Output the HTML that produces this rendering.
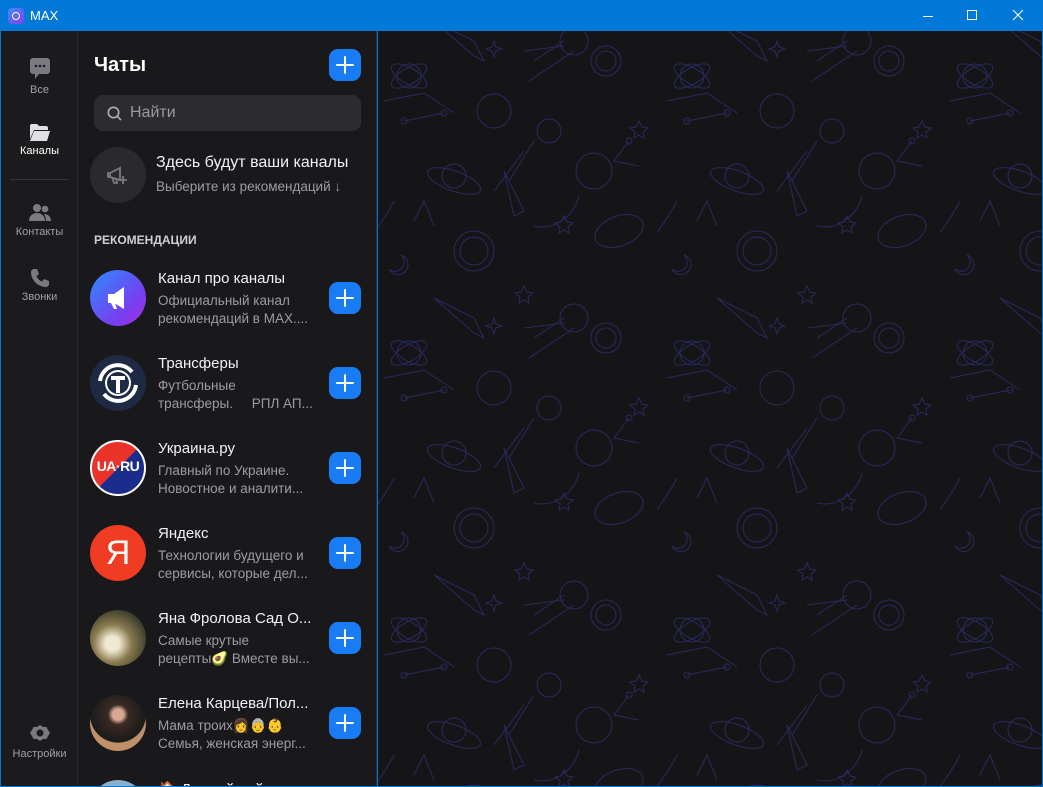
<!DOCTYPE html>
<html><head><meta charset="utf-8"><style>
*{margin:0;padding:0;box-sizing:border-box}
html,body{width:1043px;height:787px;overflow:hidden}
body{background:#0078d7;font-family:"Liberation Sans","Noto Sans CJK SC",sans-serif;position:relative}
.title{position:absolute;left:0;top:0;width:1043px;height:31px;background:#0078d7;color:#fff;font-size:13px}
.title .logo{position:absolute;left:8px;top:8px;width:16px;height:16px;border-radius:4px;background:linear-gradient(135deg,#3a8cff,#8a3cf0)}
.title .logo:after{content:"";position:absolute;left:4px;top:4px;width:6px;height:6px;border:1.6px solid #fff;border-radius:50%}
.title .t{position:absolute;left:30px;top:8px}
.side{position:absolute;left:1px;top:31px;width:77px;height:755px;background:#1b1b1e;border-right:1px solid #2a2a2e}
.nav{position:absolute;left:0;width:77px;text-align:center;font-size:11px;color:#a0a0a6}
.nav svg{display:block;margin:0 auto 3px}
.list{position:absolute;left:78px;top:31px;width:299px;height:755px;background:#19191c;border-right:1px solid #2c2c30;overflow:hidden}
.right{position:absolute;left:378px;top:31px;width:664px;height:755px;background:#151517;overflow:hidden}
h1{position:absolute;left:16px;top:23px;font-size:20px;color:#fff;font-weight:bold}
.plus{position:absolute;width:32px;height:32px;border-radius:9px;background:#1a7cf5}
.plus:before,.plus:after{content:"";position:absolute;background:#fff;border-radius:1px}
.plus:before{left:7px;top:14.8px;width:18px;height:2.6px}
.plus:after{left:14.7px;top:7px;width:2.6px;height:18px}
.search{position:absolute;left:16px;top:64px;width:267px;height:36px;border-radius:9px;background:#2c2c30;color:#9a9aa0;font-size:16px}
.search span{position:absolute;left:36px;top:9px}
.item{position:absolute;left:0;width:299px;height:85px;overflow:hidden}
.av{position:absolute;left:12px;top:0;width:56px;height:56px;border-radius:50%;overflow:hidden}
.nm{position:absolute;left:80px;top:0;font-size:15px;color:#f2f2f4;white-space:nowrap}
.ds{position:absolute;left:80px;top:22px;font-size:13.5px;color:#9c9ca2;line-height:18px;width:157px}
.item .plus{left:251px;top:12px}
</style></head><body>
<div class="title"><div class="logo"></div><div class="t">MAX</div>
<svg style="position:absolute;left:922px;top:10px" width="12" height="12"><line x1="1" y1="6.5" x2="11" y2="6.5" stroke="#fff"/></svg>
<svg style="position:absolute;left:966px;top:9px" width="12" height="12"><rect x="1.5" y="1.5" width="9" height="9" fill="none" stroke="#fff"/></svg>
<svg style="position:absolute;left:1012px;top:9px" width="12" height="12"><path d="M1 1L11 11M11 1L1 11" stroke="#fff"/></svg>
</div>
<div class="side">
<div class="nav" style="top:26px"><svg width="22" height="24" viewBox="0 0 22 24"><path d="M4 1h14a3 3 0 0 1 3 3v10a3 3 0 0 1-3 3H10l-4 5v-5H4a3 3 0 0 1-3-3V4a3 3 0 0 1 3-3z" fill="#7a7a80"/><circle cx="7" cy="9" r="1.3" fill="#1b1b1e"/><circle cx="11" cy="9" r="1.3" fill="#1b1b1e"/><circle cx="15" cy="9" r="1.3" fill="#1b1b1e"/></svg>Все</div>
<div class="nav" style="top:92px;color:#fff"><svg width="22" height="19" viewBox="0 0 22 19"><path d="M1 3a2 2 0 0 1 2-2h5l2 2h7a2 2 0 0 1 2 2v2H5L1 16z" fill="#e0e0e4"/><path d="M5 8h16l-3 10H1z" fill="#e0e0e4"/></svg>Каналы</div>
<div style="position:absolute;left:9px;top:148px;width:59px;height:1px;background:#333338"></div>
<div class="nav" style="top:172px"><svg width="24" height="20" viewBox="0 0 24 20"><circle cx="9" cy="5" r="4" fill="#7a7a80"/><circle cx="17" cy="6" r="3.3" fill="#7a7a80"/><path d="M1 18c0-5 3.5-8 8-8s8 3 8 8z" fill="#7a7a80"/><path d="M16 11c4 0 7 2.5 7 7h-5c0-3-1-5-2-7z" fill="#7a7a80"/></svg>Контакты</div>
<div class="nav" style="top:237px"><svg width="20" height="20" viewBox="0 0 20 20"><path d="M4 1l3 0 2 5-2.5 2c1 2.5 3 4.5 5.5 5.5l2-2.5 5 2v3c0 1.5-1.5 3-3 3C8 19 1 12 1 4c0-1.5 1.5-3 3-3z" fill="#7a7a80"/></svg>Звонки</div>
<div class="nav" style="top:692px"><svg width="22" height="22" viewBox="0 0 22 22"><path d="M11 1l3 2 3.5 0 1.5 3 2 3-2 3-1.5 3-3.5 0-3 2-3-2-3.5 0L3 12 1 9l2-3 1.5-3H8z" fill="#7a7a80" transform="translate(0,1)"/><circle cx="11" cy="10" r="3.5" fill="#1b1b1e"/></svg>Настройки</div>
</div>
<div class="list">
<h1>Чаты</h1>
<div class="plus" style="left:251px;top:18px"></div>
<div class="search"><svg style="position:absolute;left:13px;top:11px" width="15" height="15"><circle cx="6.5" cy="6.5" r="5.2" fill="none" stroke="#b0b0b6" stroke-width="1.6"/><line x1="10.3" y1="10.3" x2="14" y2="14" stroke="#b0b0b6" stroke-width="1.6"/></svg><span>Найти</span></div>
<div style="position:absolute;left:12px;top:116px;width:56px;height:56px;border-radius:50%;background:#2a2a2e"><svg width="56" height="56" viewBox="0 0 56 56"><path d="M20 26l10-5v12l-10-3zM20 26h-2v4h2M22 30l2 6h3l-1-5" fill="none" stroke="#7a7a80" stroke-width="1.8"/><path d="M33 29v8M29 33h8" stroke="#7a7a80" stroke-width="1.8"/></svg></div>
<div style="position:absolute;left:78px;top:123px;font-size:16px;color:#f2f2f4">Здесь будут ваши каналы</div>
<div style="position:absolute;left:78px;top:148px;font-size:13.5px;color:#9c9ca2">Выберите из рекомендаций ↓</div>
<div style="position:absolute;left:16px;top:202px;font-size:12px;color:#d0d0d4;font-weight:bold">РЕКОМЕНДАЦИИ</div>

<div class="item" style="top:239px"><div class="av" style="background:linear-gradient(135deg,#2a8cff,#7a3cf0 70%,#b030e0)"><svg width="56" height="56"><path d="M18 24h6l10-7v22l-10-6h-6z" fill="#fff"/><path d="M21 33l3 6h3l-2-6" fill="#fff"/></svg></div><div class="nm">Канал про каналы</div><div class="ds">Официальный канал рекомендаций в MAX....</div><div class="plus"></div></div>
<div class="item" style="top:324px"><div class="av" style="background:#1e2a44"><svg width="56" height="56"><path d="M10 26a18 18 0 0 1 32-9" fill="none" stroke="#fff" stroke-width="4"/><path d="M46 30a18 18 0 0 1-32 9" fill="none" stroke="#fff" stroke-width="4"/><circle cx="28" cy="28" r="13" fill="#fff"/><circle cx="28" cy="28" r="11" fill="#1e2a44"/><path d="M21 21h14v4h-5v13h-4V25h-5z" fill="#fff"/></svg></div><div class="nm">Трансферы</div><div class="ds">Футбольные трансферы.&nbsp;&nbsp;&nbsp;&nbsp; РПЛ АП...</div><div class="plus"></div></div>
<div class="item" style="top:409px"><div class="av" style="background:linear-gradient(135deg,#e8322a 50%,#1a2c8c 50%);border:2px solid #fff"><div style="position:absolute;left:0;width:52px;top:16px;text-align:center;color:#fff;font-weight:bold;font-size:14px;letter-spacing:-.5px">UA·RU</div></div><div class="nm">Украина.ру</div><div class="ds">Главный по Украине. Новостное и аналити...</div><div class="plus"></div></div>
<div class="item" style="top:494px"><div class="av" style="background:#f03c22"><div style="position:absolute;left:0;width:56px;top:9px;text-align:center;color:#fff;font-size:34px">Я</div></div><div class="nm">Яндекс</div><div class="ds">Технологии будущего и сервисы, которые дел...</div><div class="plus"></div></div>
<div class="item" style="top:579px"><div class="av" style="background:radial-gradient(circle at 40% 60%,#f0e8d0 15%,#8a7a50 40%,#3a3a2a 75%)"></div><div class="nm">Яна Фролова Сад О...</div><div class="ds">Самые крутые<br>рецепты🥑 Вместе вы...</div><div class="plus"></div></div>
<div class="item" style="top:664px"><div class="av" style="background:radial-gradient(circle at 50% 35%,#d8a890 12%,#3a2a24 22%,#1a1a1a 60%,#c0906a 62%)"></div><div class="nm">Елена Карцева/Пол...</div><div class="ds">Мама троих👩👵👶<br>Семья, женская энерг...</div><div class="plus"></div></div>
<div class="item" style="top:749px;height:6px"><div class="av" style="background:#8ab0d0"></div><div class="nm">🏠 Дачный рай</div></div>
</div>
<div class="right"><svg width="664" height="755"><defs><pattern id="p" width="283" height="277" patternUnits="userSpaceOnUse" x="-4" y="-30"><g fill="none" stroke="#28285e" stroke-width="1">
<circle cx="35" cy="75" r="12"/><ellipse cx="35" cy="75" rx="20" ry="8" transform="rotate(30 35 75)"/><ellipse cx="35" cy="75" rx="20" ry="8" transform="rotate(-30 35 75)"/>
<path d="M10 100l40-8 30 20M30 120l40-8"/><circle cx="30" cy="120" r="3"/><circle cx="70" cy="112" r="3"/>
<path d="M60 20l40 20l10 20l-10 -5z"/><path d="M160 60l30-20"/><circle cx="200" cy="40" r="14"/><path d="M150 50l40-5M155 80l45-30"/>
<circle cx="232" cy="60" r="10"/><circle cx="232" cy="60" r="15"/>
<circle cx="120" cy="110" r="17"/><circle cx="175" cy="130" r="12"/><path d="M160 140l-25 40M150 150l-30 40"/>
<circle cx="220" cy="170" r="18"/><ellipse cx="80" cy="180" rx="28" ry="10" transform="rotate(20 80 180)"/><circle cx="80" cy="175" r="12"/>
<path d="M130 170l20 40-10 5z"/><path d="M160 225c20 5 40-10 45-30"/><circle cx="100" cy="250" r="20"/><circle cx="100" cy="250" r="14"/>
<path d="M20 200c-10 20-20 30-25 40"/><path d="M40 220l10 -20 10 25"/><ellipse cx="245" cy="230" rx="25" ry="15" transform="rotate(-20 245 230)"/>
<path d="M15 268a10 10 0 1 0 12 -14a8 8 0 1 1 -12 14z"/><path d="M150 8l3 6 6 1-5 4 1 6-5-3-5 3 1-6-5-4 6-1z"/><path d="M265 120l3 6 6 1-5 4 1 6-5-3-5 3 1-6-5-4 6-1z"/>
<path d="M120 40l2 6 6 2-6 2-2 6-2-6-6-2 6-2z"/><path d="M255 140l-15 20 25 5"/><circle cx="255" cy="140" r="3"/><path d="M190 215l3 6 6 1-5 4 1 6-5-3-5 3 1-6-5-4 6-1z"/>
</g></pattern></defs><rect width="664" height="755" fill="url(#p)"/></svg></div>
</body></html>
